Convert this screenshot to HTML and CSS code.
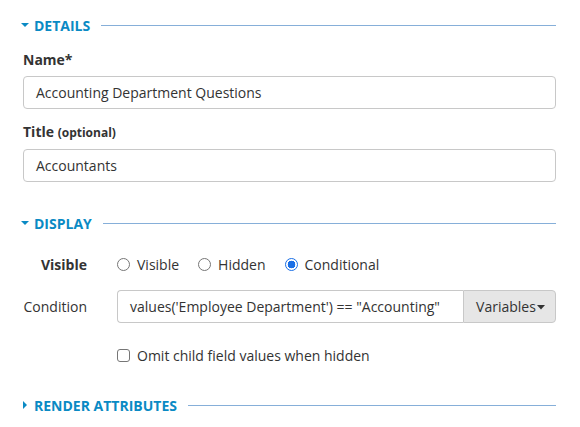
FILE: index.html
```html
<!DOCTYPE html>
<html>
<head>
<meta charset="utf-8">
<link rel="stylesheet" href="styles.css">
</head>
<body>
<div class="form">
  <div class="section-header first">
    <svg class="caret" width="8" height="8" viewBox="0 0 8 8"><path d="M0 2 L8 2 L4 6 Z" fill="#0a8ac4"/></svg>
    <span class="section-title">Details</span>
    <span class="rule"></span>
  </div>

  <div class="field">
    <div class="label">Name*</div>
    <div class="input">Accounting Department Questions</div>
  </div>

  <div class="field second">
    <div class="label">Title <small>(optional)</small></div>
    <div class="input">Accountants</div>
  </div>

  <div class="section-header display">
    <svg class="caret" width="8" height="8" viewBox="0 0 8 8"><path d="M0 2 L8 2 L4 6 Z" fill="#0a8ac4"/></svg>
    <span class="section-title">Display</span>
    <span class="rule"></span>
  </div>

  <div class="row visible-row">
    <div class="row-label bold">Visible</div>
    <div class="radios">
      <span class="option"><span class="radio"></span>Visible</span>
      <span class="option"><span class="radio"></span>Hidden</span>
      <span class="option"><span class="radio checked"></span>Conditional</span>
    </div>
  </div>

  <div class="row condition-row">
    <div class="row-label">Condition</div>
    <div class="group">
      <div class="group-input">values('Employee Department') == "Accounting"</div>
      <div class="group-btn">Variables<svg width="8" height="5" viewBox="0 0 8 5"><path d="M0 0 L8 0 L4 4.5 Z" fill="#333"/></svg></div>
    </div>
  </div>

  <div class="row check-row">
    <div class="row-label"></div>
    <span class="option"><span class="checkbox"></span>Omit child field values when hidden</span>
  </div>

  <div class="section-header render">
    <svg class="caret" width="8" height="8" viewBox="0 0 8 8"><path d="M2 0 L6 4 L2 8 Z" fill="#0a8ac4"/></svg>
    <span class="section-title">Render Attributes</span>
    <span class="rule"></span>
  </div>
</div>
</body>
</html>
```

FILE: styles.css
```css
html, body {
  margin: 0;
  padding: 0;
  background: #fff;
}
body {
  font-family: "Open Sans", "Liberation Sans", sans-serif;
  color: #333;
  font-size: 14px;
}
.form {
  padding: 0 24px 0 23px;
}
.section-header {
  display: flex;
  align-items: center;
  height: 20px;
}
.section-header.first { margin-top: 15px; }
.section-header.display { margin-top: 31px; }
.section-header.render { margin-top: 30px; }
.caret {
  margin-left: -2px;
  margin-right: 5px;
  flex: none;
}
.section-title {
  font-size: 14px;
  font-weight: 700;
  text-transform: uppercase;
  color: #0a8ac4;
}
.rule {
  flex: 1;
  height: 1px;
  background: #86afd9;
  margin-left: 11px;
}
.field { margin-top: 15px; }
.field.second { margin-top: 13px; }
.label {
  font-weight: 700;
  font-size: 14px;
  line-height: 20px;
  color: #333;
  margin-bottom: 6px;
}
.label small {
  font-size: 12px;
}
.input {
  height: 33px;
  box-sizing: border-box;
  border: 1px solid #c8c8c8;
  border-radius: 4px;
  padding: 0 12px;
  display: flex;
  align-items: center;
  color: #333;
}
.row {
  display: flex;
  align-items: center;
}
.row-label {
  width: 64px;
  flex: none;
  text-align: right;
  margin-right: 30px;
}
.row-label.bold { font-weight: 700; }
.visible-row { margin-top: 21px; height: 20px; }
.condition-row { margin-top: 16px; }
.check-row { margin-top: 22px; height: 20px; }
.radios {
  display: flex;
  gap: 19px;
}
.option {
  display: inline-flex;
  align-items: center;
}
.radio {
  width: 13px;
  height: 13px;
  box-sizing: border-box;
  border: 1px solid #767676;
  border-radius: 50%;
  margin-right: 7px;
  background: #fff;
}
.radio.checked {
  border: 1px solid #1a6fe6;
  background: radial-gradient(circle, #1a6fe6 0 3.6px, #fff 4.1px);
}
.checkbox {
  width: 13px;
  height: 13px;
  box-sizing: border-box;
  border: 1px solid #767676;
  border-radius: 3px;
  margin-right: 7px;
}
.group {
  flex: 1;
  display: flex;
  height: 33px;
}
.group-input {
  flex: 1;
  box-sizing: border-box;
  border: 1px solid #c8c8c8;
  border-right: none;
  border-radius: 4px 0 0 4px;
  padding: 0 12px;
  display: flex;
  align-items: center;
}
.group-btn {
  width: 93px;
  box-sizing: border-box;
  border: 1px solid #c8c8c8;
  border-radius: 0 4px 4px 0;
  background: #e6e6e6;
  display: flex;
  align-items: center;
  justify-content: center;
  padding-left: 2px;
}
.group-btn svg { margin-left: 1px; margin-top: 1px; }
```
